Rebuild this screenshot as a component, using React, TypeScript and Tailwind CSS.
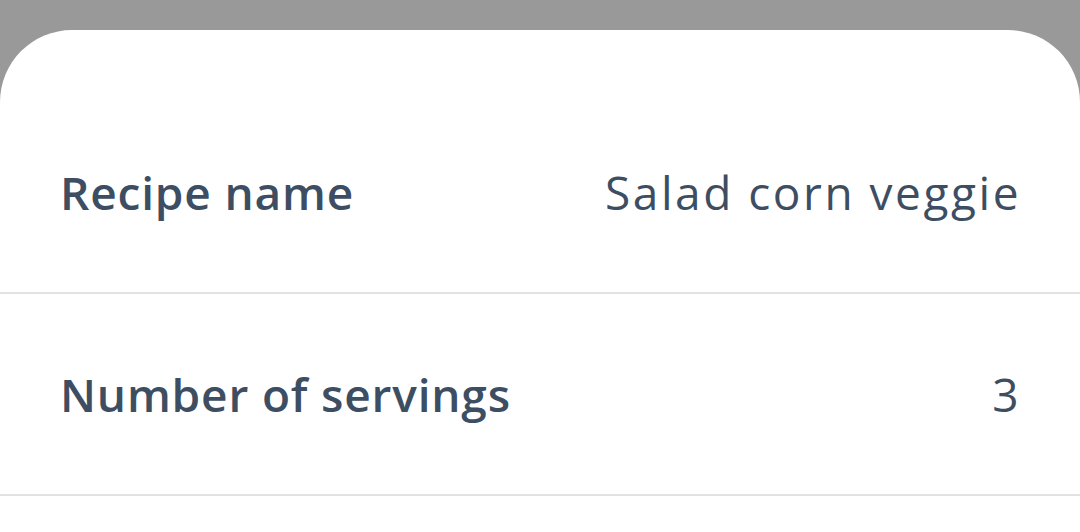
import React from "react";

function Row({ label, value }: { label: string; value: string }) {
  return (
    <div className="flex h-[202px] items-center justify-between pl-[60px] pr-[62px] border-b-2 border-[#e2e2e2]">
      <span className="text-[46px] font-semibold tracking-[0.018em] text-[#3d4e62] leading-none">{label}</span>
      <span className="-mr-[3px] text-[46px] font-normal tracking-[0.055em] text-[#3d4e62] leading-none">{value}</span>
    </div>
  );
}

export default function App() {
  return (
    <div className="h-[532px] w-[1080px] overflow-hidden bg-[#999999] pt-[30px]" style={{ fontFamily: "'Open Sans', sans-serif" }}>
      <div className="h-full rounded-t-[72px] bg-white pt-[62px]">
        <Row label="Recipe name" value="Salad corn veggie" />
        <Row label="Number of servings" value="3" />
      </div>
    </div>
  );
}
